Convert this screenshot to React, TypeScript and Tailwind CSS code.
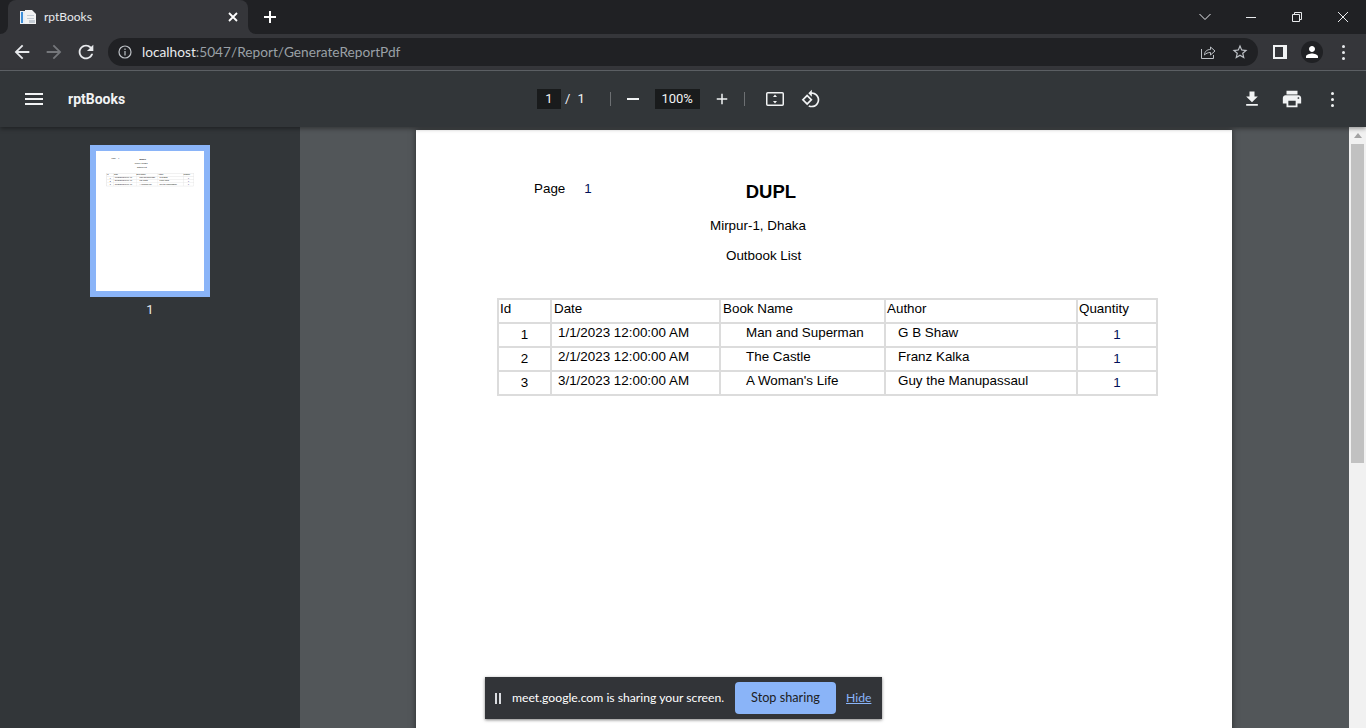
import React from "react";

const Icon = ({ d, className }: { d: string; className: string }) => (
  <svg viewBox="0 0 24 24" fill="currentColor" className={className}>
    <path d={d} />
  </svg>
);

const rows = [
  { id: 1, date: "1/1/2023 12:00:00 AM", book: "Man and Superman", author: "G B Shaw" },
  { id: 2, date: "2/1/2023 12:00:00 AM", book: "The Castle", author: "Franz Kalka" },
  { id: 3, date: "3/1/2023 12:00:00 AM", book: "A Woman's Life", author: "Guy the Manupassaul" },
];

const Report = () => (
  <div className="w-[816px] font-['Liberation_Sans',Arial,sans-serif] text-[13.4px] leading-[16px] text-black">
    <div className="flex pt-[50px]">
      <span className="ml-[118px] mt-[1px]">Page</span>
      <span className="ml-[19px] mt-[1px] text-[#00105a]">1</span>
      <span className="ml-[154px] mt-[1px] text-[18.5px] leading-[22px] font-bold">DUPL</span>
    </div>
    <div className="ml-[294px] mt-[15px]">Mirpur-1, Dhaka</div>
    <div className="ml-[310px] mt-[14px]">Outbook List</div>
    <div className="ml-[81px] mt-[34px] grid w-[661px] grid-cols-[51px_167px_163px_190px_78px] gap-[2px] border-2 border-[#dcdcdc] bg-[#dcdcdc]">
      <div className="h-[22px] bg-white pl-[1px] pt-[1px]">Id</div>
      <div className="h-[22px] bg-white pl-[2px] pt-[1px]">Date</div>
      <div className="h-[22px] bg-white pl-[2px] pt-[1px]">Book Name</div>
      <div className="h-[22px] bg-white pl-[1px] pt-[1px]">Author</div>
      <div className="h-[22px] bg-white pl-[1px] pt-[1px]">Quantity</div>
      {rows.map((r) => (
        <React.Fragment key={r.id}>
          <div className="h-[22px] bg-white pt-[3px] text-center">{r.id}</div>
          <div className="h-[22px] bg-white pl-[6px] pt-[1px]">{r.date}</div>
          <div className="h-[22px] bg-white pl-[25px] pt-[1px]">{r.book}</div>
          <div className="h-[22px] bg-white pl-[12px] pt-[1px]">{r.author}</div>
          <div className="h-[22px] bg-white pt-[3px] text-center text-[#00105a]">1</div>
        </React.Fragment>
      ))}
    </div>
  </div>
);

export default function App() {
  return (
    <div className="relative flex h-screen w-full flex-col overflow-hidden bg-[#525659] font-['Lato',sans-serif]">
      {/* tab strip */}
      <div className="flex h-[34px] shrink-0 items-end bg-[#202124] text-white">
        <div className="relative ml-2 flex h-[34px] w-[240px] items-center rounded-t-lg bg-[#35363a] pl-3 pr-[10px]">
          <div className="absolute bottom-0 left-[-8px] h-2 w-2 bg-[#35363a]">
            <div className="h-full w-full rounded-br-lg bg-[#202124]" />
          </div>
          <div className="absolute bottom-0 right-[-8px] h-2 w-2 bg-[#35363a]">
            <div className="h-full w-full rounded-bl-lg bg-[#202124]" />
          </div>
          <svg viewBox="0 0 16 16" className="h-4 w-4 shrink-0">
            <path d="M0 2h5v13H0z" fill="#e8eef5" />
            <path d="M1 3h2v11H1z" fill="#3f8fd8" />
            <path d="M5 1h7l4 4v10H5z" fill="#f2f2f2" />
            <path d="M7 6h7v1H7zM7 9h7v1H7zM9 11h6v3H9z" fill="#c4ccd4" />
          </svg>
          <span className="ml-2 flex-1 text-[12px] text-[#e8eaed]">rptBooks</span>
          <svg viewBox="0 0 10 10" className="h-[10px] w-[10px]" stroke="currentColor" strokeWidth="1.8">
            <path d="M1 1l8 8M9 1l-8 8" />
          </svg>
        </div>
        <svg viewBox="0 0 14 14" className="mb-[10px] ml-[15px] h-[14px] w-[14px]" stroke="currentColor" strokeWidth="2">
          <path d="M7 1v12M1 7h12" />
        </svg>
        <div className="flex-1" />
        <div className="flex h-[34px] items-center text-[#e8eaed]">
          <svg viewBox="0 0 12 8" className="mr-[35px] h-2 w-3" fill="none" stroke="currentColor">
            <path d="M.5 1L6 6.500 11.500 1" />
          </svg>
          <div className="mr-[36px] h-[1px] w-[10px] bg-current" />
          <svg viewBox="0 0 10 10" className="mr-[36px] h-[10px] w-[10px]" fill="none" stroke="currentColor">
            <path d="M.5 2.500h7v7h-7zM2.500 2.500v-2h7v7h-2" />
          </svg>
          <svg viewBox="0 0 10 10" className="mr-[18px] h-[10px] w-[10px]" stroke="currentColor">
            <path d="M0 0l10 10M10 0L0 10" />
          </svg>
        </div>
      </div>

      {/* browser toolbar */}
      <div className="flex h-[37px] shrink-0 items-center border-b border-[#5f6368] bg-[#35363a] text-[#e8eaed]">
        <Icon className="ml-[11px] h-[22px] w-[22px]" d="M20 11H7.830l5.590-5.590L12 4l-8 8 8 8 1.410-1.410L7.830 13H20v-2z" />
        <Icon className="ml-[10px] h-[22px] w-[22px] rotate-180 text-[#75777b]" d="M20 11H7.830l5.590-5.590L12 4l-8 8 8 8 1.410-1.410L7.830 13H20v-2z" />
        <Icon className="ml-[10px] h-[22px] w-[22px]" d="M17.650 6.350C16.200 4.900 14.210 4 12 4c-4.420 0-7.990 3.580-7.990 8s3.570 8 7.990 8c3.730 0 6.840-2.550 7.730-6h-2.080c-.82 2.330-3.040 4-5.650 4-3.310 0-6-2.690-6-6s2.690-6 6-6c1.660 0 3.140.69 4.220 1.780L13 11h7V4l-2.350 2.350z" />
        <div className="ml-[11px] flex h-[28px] w-[1150px] items-center rounded-full bg-[#202124] pl-[10px] pr-[8px]">
          <svg viewBox="0 0 14 14" className="h-[14px] w-[14px] text-[#bdc1c6]" fill="none" stroke="currentColor" strokeWidth="1.2">
            <circle cx="7" cy="7" r="6" />
            <path d="M7 6v4.500M7 3.500v1.400" />
          </svg>
          <span className="ml-[10px] flex-1 text-[13.7px] text-[#9aa0a6]">
            <span className="text-[#e8eaed]">localhost</span>:5047/Report/GenerateReportPdf
          </span>
          <svg viewBox="0 0 16 16" className="h-4 w-4 text-[#bdc1c6]" fill="none" stroke="currentColor">
            <path d="M1.500 5v9.500h12V11" />
            <path d="M4.500 11c0-3.500 2.500-5.500 6-5.500V3l4.500 4-4.500 4V8.500c-2.500 0-4.500.8-6 2.500z" />
          </svg>
          <svg viewBox="0 0 24 24" className="ml-[15px] mr-[1px] h-[18px] w-[18px] text-[#bdc1c6]" fill="currentColor">
            <path d="M22 9.240l-7.190-.62L12 2 9.190 8.630 2 9.240l5.460 4.730L5.820 21 12 17.270 18.180 21l-1.630-7.030L22 9.240zM12 15.400l-3.760 2.270 1-4.280-3.320-2.880 4.380-.38L12 6.100l1.710 4.040 4.380.38-3.320 2.880 1 4.280L12 15.400z" />
          </svg>
        </div>
        <div className="ml-[15px] h-[14px] w-[14px] bg-[#f1f3f4] py-[2px] pl-[2px] pr-[4px]">
          <div className="h-full w-full bg-[#35363a]" />
        </div>
        <div className="ml-[14px] flex h-[22px] w-[22px] items-center justify-center rounded-full bg-[#202124]">
          <Icon className="h-[18px] w-[18px] text-white" d="M12 12c2.200 0 4-1.800 4-4s-1.800-4-4-4-4 1.800-4 4 1.800 4 4 4zm0 2c-2.700 0-8 1.300-8 4v2h16v-2c0-2.700-5.300-4-8-4z" />
        </div>
        <div className="ml-[19px] flex flex-col gap-[3px]">
          <div className="h-[3px] w-[3px] rounded-full bg-[#e8eaed]" />
          <div className="h-[3px] w-[3px] rounded-full bg-[#e8eaed]" />
          <div className="h-[3px] w-[3px] rounded-full bg-[#e8eaed]" />
        </div>
      </div>

      {/* pdf toolbar */}
      <div className="z-10 flex h-[56px] shrink-0 items-center bg-[#323639] font-['Roboto',sans-serif] text-[13px] text-[#f1f3f4] shadow-[0_2px_4px_rgba(0,0,0,0.35)]">
        <Icon className="ml-[22px] h-6 w-6" d="M3 18h18v-2H3v2zm0-5h18v-2H3v2zm0-7v2h18V6H3z" />
        <span className="ml-[22px] w-[469px] text-[14px] font-bold">rptBooks</span>
        <div className="flex h-5 w-6 items-center justify-center bg-[#191b1c]">1</div>
        <span className="ml-[4px]">/</span>
        <span className="ml-[7px]">1</span>
        <div className="ml-[25px] h-[14px] w-[1px] bg-[#6d7073]" />
        <div className="ml-[16px] h-[2px] w-[12px] bg-current" />
        <div className="ml-[16px] flex h-5 w-[45px] items-center justify-center bg-[#191b1c]">100%</div>
        <Icon className="ml-[13px] h-[18px] w-[18px]" d="M19 13h-6v6h-2v-6H5v-2h6V5h2v6h6v2z" />
        <div className="ml-[13px] h-[14px] w-[1px] bg-[#6d7073]" />
        <svg viewBox="0 0 18 14" className="ml-[21px] h-[14px] w-[18px]" fill="none" stroke="currentColor" strokeWidth="1.5">
          <rect x=".75" y=".75" width="16.500" height="12.500" rx="1" />
          <path d="M9 2.500l2 2.500H7zM9 11.500L7 9h4z" fill="currentColor" stroke="none" />
        </svg>
        <Icon className="ml-[17px] h-5 w-5" d="M7.340 6.410L.86 12.900l6.490 6.480 6.490-6.480-6.500-6.490zM3.690 12.900l3.660-3.660L11 12.900l-3.660 3.660-3.650-3.660zm15.670-6.260C17.610 4.880 15.300 4 13 4V.76L8.760 5 13 9.240V6c1.790 0 3.580.68 4.950 2.050 2.730 2.730 2.730 7.170 0 9.900C16.580 19.320 14.790 20 13 20c-.97 0-1.940-.21-2.840-.61l-1.490 1.490C10.020 21.620 11.510 22 13 22c2.300 0 4.610-.88 6.360-2.640 3.520-3.510 3.520-9.210 0-12.720z" />
        <Icon className="ml-[421px] h-5 w-5" d="M19 9h-4V3H9v6H5l7 7 7-7zM5 18v2h14v-2H5z" />
        <Icon className="ml-[19px] h-[22px] w-[22px]" d="M19 8H5c-1.660 0-3 1.340-3 3v6h4v4h12v-4h4v-6c0-1.660-1.340-3-3-3zm-3 11H8v-5h8v5zm3-7c-.55 0-1-.45-1-1s.45-1 1-1 1 .45 1 1-.45 1-1 1zm-1-9H6v4h12V3z" />
        <div className="ml-[28px] flex flex-col gap-[3px]">
          <div className="h-[3px] w-[3px] rounded-full bg-current" />
          <div className="h-[3px] w-[3px] rounded-full bg-current" />
          <div className="h-[3px] w-[3px] rounded-full bg-current" />
        </div>
      </div>

      {/* viewer body */}
      <div className="flex min-h-0 flex-1">
        <aside className="flex w-[300px] shrink-0 flex-col items-center bg-[#323639] pt-[18px]">
          <div className="h-[152px] w-[120px] overflow-hidden border-[6px] border-[#8ab4f8] bg-white">
            <div className="origin-top-left scale-[0.132]">
              <Report />
            </div>
          </div>
          <span className="mt-[3px] font-['Roboto',sans-serif] text-[13px] text-[#e8eaed]">1</span>
        </aside>
        <main className="flex flex-1 justify-center overflow-hidden pt-[3px]">
          <div className="mr-[1px] h-[800px] w-[816px] shrink-0 bg-white shadow-[0_0_6px_rgba(0,0,0,0.5)]">
            <Report />
          </div>
        </main>
        <div className="flex w-[17px] shrink-0 flex-col items-center bg-[#f1f1f1]">
          <svg viewBox="0 0 8 5" className="mt-[6px] h-[5px] w-2 text-[#a3a3a3]" fill="currentColor">
            <path d="M4 0l4 5H0z" />
          </svg>
          <div className="mt-[6px] h-[319px] w-[13px] bg-[#c1c1c1]" />
        </div>
      </div>

      {/* screen sharing bar */}
      <div className="absolute bottom-[9px] left-[485px] z-20 flex h-[42px] w-[397px] items-center bg-[#323438] text-[12.2px] text-white shadow-[0_1px_3px_rgba(0,0,0,0.5)]">
        <div className="ml-[10px] h-[11px] w-[2px] bg-[#dadce0]" />
        <div className="ml-[2px] h-[11px] w-[2px] bg-[#dadce0]" />
        <span className="ml-[11px] w-[213px] whitespace-nowrap">meet.google.com is sharing your screen.</span>
        <button className="ml-[10px] h-[32px] w-[101px] rounded bg-[#8ab4f8] text-[12.7px] text-[#202124]">Stop sharing</button>
        <a className="ml-[10px] text-[#8ab4f8] underline">Hide</a>
      </div>
    </div>
  );
}
